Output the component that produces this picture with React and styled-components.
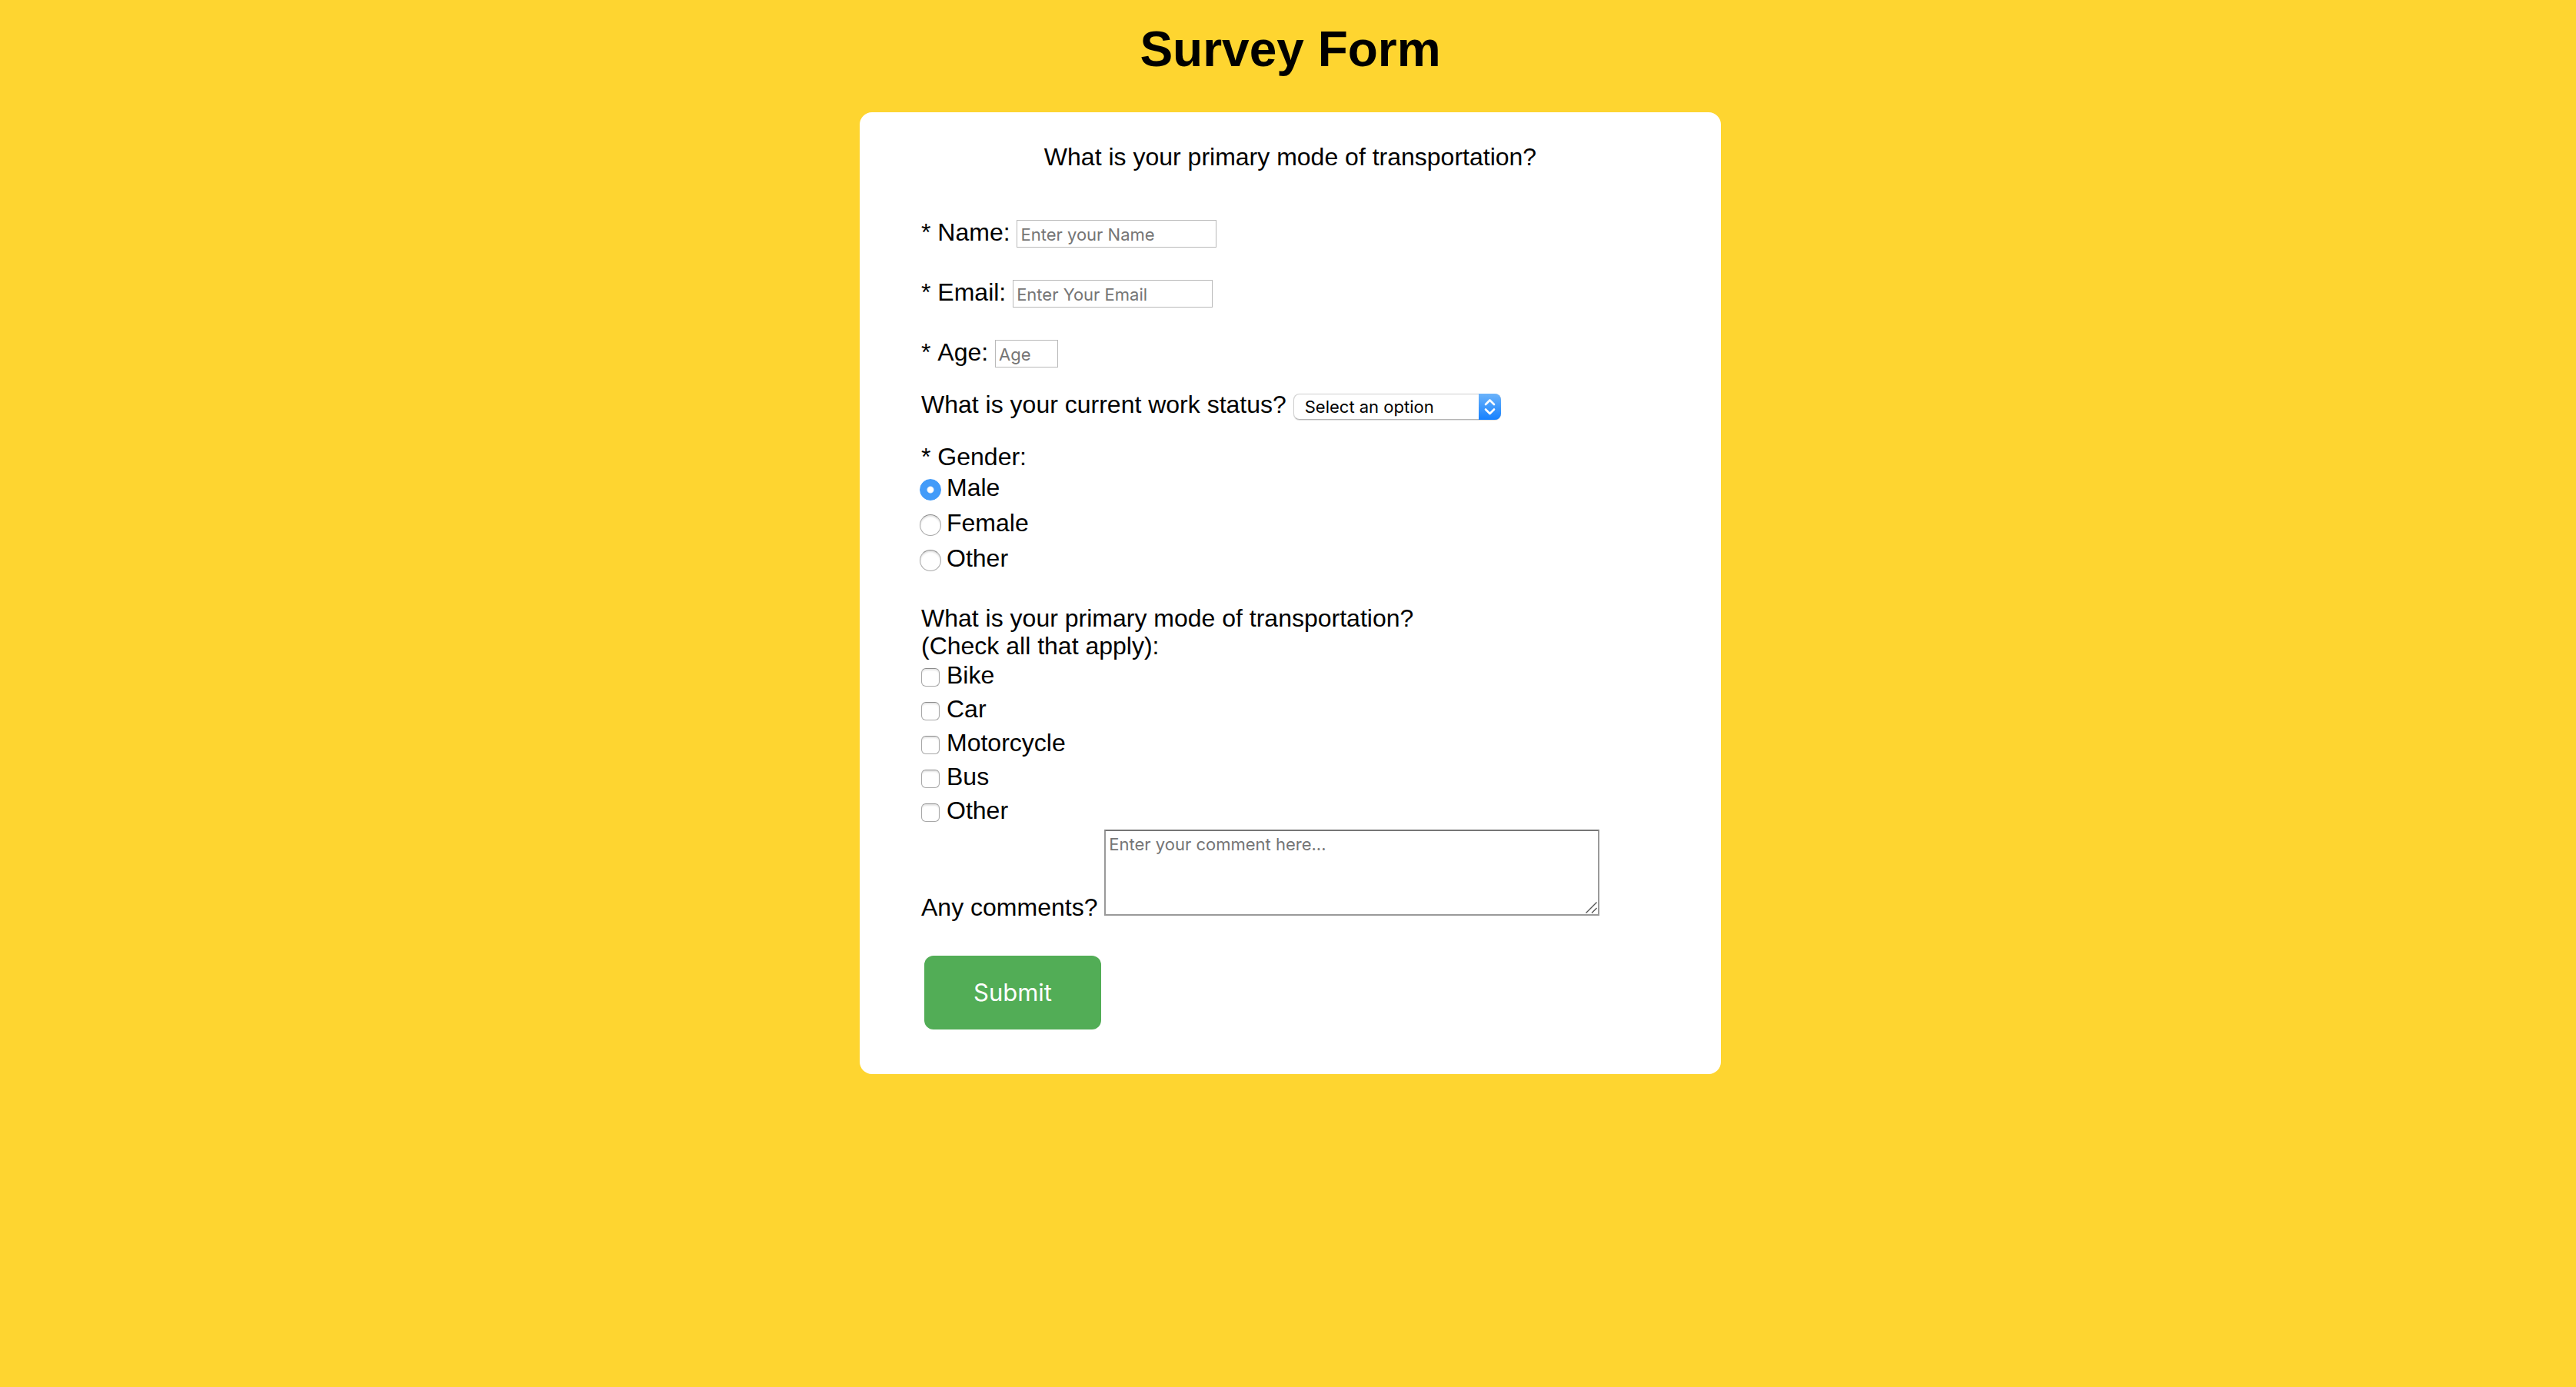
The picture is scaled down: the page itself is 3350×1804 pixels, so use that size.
import React from "react";
import styled, { createGlobalStyle } from "styled-components";

const bodyFont = `"Liberation Sans", Arial, Helvetica, sans-serif`;
const controlFont = `Inter, "Helvetica Neue", Arial, sans-serif`;

const GlobalStyle = createGlobalStyle`
  *, *::before, *::after { box-sizing: border-box; }
  html { background: #fed530; }
  body {
    margin: 0;
    color: #000;
    font: 32px/36px ${bodyFont};
    font-kerning: none;
  }
`;

const Page = styled.main`
  display: flex;
  flex-direction: column;
  align-items: center;
  padding: 28px 0 28px 6px;
`;

const Title = styled.h1`
  margin: 0 0 46px;
  font-size: 64px;
  line-height: 72px;
`;

const Card = styled.section`
  width: 100%;
  max-width: 1120px;
  padding: 40px 80px 58px;
  border-radius: 16px;
  background: #fff;
`;

const Description = styled.p`
  margin: 0 0 62px;
  text-align: center;
`;

const Row = styled.div`
  margin-bottom: ${(p) => p.$gap}px;
`;

const TextField = styled.input`
  width: ${(p) => (p.$short ? 82 : 260)}px;
  height: 36px;
  margin: 0;
  padding: 2px 4px 0;
  border: 1px solid #b9b9b9;
  border-radius: 0;
  background: #fff;
  font: 22px ${controlFont};

  &::placeholder { color: #757575; opacity: 1; }
`;

const SelectBox = styled.span`
  position: relative;
  display: inline-flex;
`;

const Select = styled.select`
  appearance: none;
  width: 270px;
  height: 34px;
  margin: 0;
  padding: 0 32px 0 14px;
  border: 1px solid #cfcfcf;
  border-bottom-color: #b5b5b5;
  border-radius: 8px;
  background: #fff;
  box-shadow: 0 1px 1px rgba(0, 0, 0, 0.12);
  color: #000;
  font: 22px ${controlFont};
`;

const SelectArrows = styled.span`
  position: absolute;
  top: 0;
  right: 0;
  bottom: 0;
  width: 29px;
  border-radius: 0 8px 8px 0;
  background: linear-gradient(#6cb3fa, #1580ff);
  pointer-events: none;

  svg { display: block; }
`;

const Group = styled.fieldset`
  min-width: 0;
  margin: 0 0 ${(p) => p.$gap}px;
  padding: 0;
  border: 0;
`;

const Legend = styled.legend`
  display: block;
  padding: 0 0 ${(p) => p.$gap}px;
`;

const Options = styled.div`
  display: flex;
  flex-direction: column;
  align-items: flex-start;
  gap: ${(p) => p.$gap}px;
`;

const Option = styled.label`
  display: block;
`;

const Radio = styled.input`
  appearance: none;
  width: 28px;
  height: 28px;
  margin: 0 7px 0 -2px;
  vertical-align: -6px;
  border: 1px solid #a8a8a8;
  border-top-color: #8c8c8c;
  border-radius: 50%;
  background: #fff;
  box-shadow: inset 0 2px 2px rgba(0, 0, 0, 0.12);

  &:checked {
    border-color: #429bf9;
    background: radial-gradient(circle, #fff 0 3px, #e4eefb 4px, #429bf9 5px);
    box-shadow: none;
  }
`;

const Checkbox = styled.input`
  appearance: none;
  width: 24px;
  height: 24px;
  margin: 0 9px 0 0;
  vertical-align: -4px;
  border: 1px solid #a8a8a8;
  border-top-color: #8c8c8c;
  border-radius: 6px;
  background: #fff;
  box-shadow: inset 0 2px 2px rgba(0, 0, 0, 0.1);

  &:checked { border-color: #429bf9; background: #429bf9; }
`;

const Comments = styled.textarea`
  width: 644px;
  height: 112px;
  margin: 0;
  padding: 4px;
  border: 2px solid #9a9a9a;
  border-top-color: #767676;
  border-radius: 0;
  background: #fff;
  font: 22px ${controlFont};
  vertical-align: baseline;
  resize: both;

  &::placeholder { color: #757575; opacity: 1; }
  &::-webkit-resizer { background: transparent; }
`;

const CommentsBox = styled.span`
  position: relative;
  display: inline-block;
  height: 112px;
  vertical-align: bottom;
  margin-bottom: 7px;
`;

const Grip = styled.svg`
  position: absolute;
  right: 3px;
  bottom: 3px;
  pointer-events: none;
`;

const Submit = styled.button`
  display: block;
  margin: 0 4px;
  padding: 28px 64px;
  border: 0;
  border-radius: 12px;
  background: #52ad56;
  color: #fff;
  font: 31px/40px ${controlFont};
`;

const genders = ["Male", "Female", "Other"];
const transports = ["Bike", "Car", "Motorcycle", "Bus", "Other"];

export default function App() {
  return (
    <>
      <GlobalStyle />
      <Page>
        <Title>Survey Form</Title>
        <Card>
          <Description>What is your primary mode of transportation?</Description>
          <form onSubmit={(e) => e.preventDefault()}>
            <Row $gap={40}>
              <label htmlFor="name">* Name:</label>{" "}
              <TextField id="name" type="text" placeholder="Enter your Name" />
            </Row>
            <Row $gap={40}>
              <label htmlFor="email">* Email:</label>{" "}
              <TextField id="email" type="email" placeholder="Enter Your Email" />
            </Row>
            <Row $gap={30}>
              <label htmlFor="age">* Age:</label>{" "}
              <TextField id="age" type="text" inputMode="numeric" placeholder="Age" $short />
            </Row>
            <Row $gap={30}>
              <label htmlFor="status">What is your current work status?</label>{" "}
              <SelectBox>
                <Select id="status" defaultValue="">
                  <option value="">Select an option</option>
                </Select>
                <SelectArrows>
                  <svg width="29" height="34" viewBox="0 0 29 34" fill="none" stroke="#fff" strokeWidth="2.6" strokeLinecap="round" strokeLinejoin="round" aria-hidden="true">
                    <path d="M9 14l5.500-5.500 5.500 5.500M9 20.500l5.500 5.500 5.500-5.500" />
                  </svg>
                </SelectArrows>
              </SelectBox>
            </Row>
            <Group $gap={42}>
              <Legend $gap={4}>* Gender:</Legend>
              <Options $gap={10}>
                {genders.map((g) => (
                  <Option key={g}>
                    <Radio type="radio" name="gender" value={g} defaultChecked={g === "Male"} />
                    {g}
                  </Option>
                ))}
              </Options>
            </Group>
            <Group $gap={7}>
              <Legend $gap={2}>
                What is your primary mode of transportation?
                <br />
                (Check all that apply):
              </Legend>
              <Options $gap={8}>
                {transports.map((t) => (
                  <Option key={t}>
                    <Checkbox type="checkbox" name="transport" value={t} />
                    {t}
                  </Option>
                ))}
              </Options>
            </Group>
            <Row $gap={45}>
              <label htmlFor="comments">Any comments?</label>{" "}
              <CommentsBox>
                <Comments id="comments" placeholder="Enter your comment here..." />
                <Grip width="15" height="15" viewBox="0 0 15 15" stroke="#555" strokeWidth="1.4" aria-hidden="true">
                  <path d="M0.500 14.500L14.500 0.500M8 14.500L14.500 8" />
                </Grip>
              </CommentsBox>
            </Row>
            <Submit type="submit">Submit</Submit>
          </form>
        </Card>
      </Page>
    </>
  );
}
